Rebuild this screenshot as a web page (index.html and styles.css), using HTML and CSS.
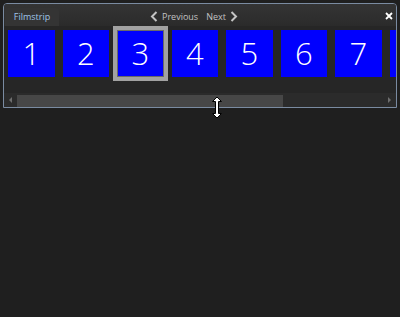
FILE: index.html
```html
<!DOCTYPE html>
<html lang="en">
<head>
    <meta charset="UTF-8">
    <title>Filmstrip</title>
    <link rel="stylesheet" href="styles.css">
</head>
<body>
    <div class="filmstrip">
        <div class="header">
            <div class="tab">Filmstrip</div>
            <div class="nav">
                <span class="nav-btn">
                    <svg class="chevron" width="8" height="11" viewBox="0 0 8 11"><path d="M6.5 1 L2 5.5 L6.5 10" fill="none" stroke="#c4c4c4" stroke-width="2"/></svg>
                    Previous
                </span>
                <span class="nav-btn next">
                    Next
                    <svg class="chevron" width="8" height="11" viewBox="0 0 8 11"><path d="M1.5 1 L6 5.5 L1.5 10" fill="none" stroke="#c4c4c4" stroke-width="2"/></svg>
                </span>
            </div>
            <svg class="close" width="8" height="8" viewBox="0 0 8 8"><path d="M1 1 L7 7 M7 1 L1 7" stroke="#ffffff" stroke-width="1.8"/></svg>
        </div>
        <div class="strip">
            <div class="thumb">1</div>
            <div class="thumb">2</div>
            <div class="thumb selected">3</div>
            <div class="thumb">4</div>
            <div class="thumb">5</div>
            <div class="thumb">6</div>
            <div class="thumb">7</div>
            <div class="thumb"></div>
        </div>
        <div class="scrollbar">
            <div class="arrow left"></div>
            <div class="thumb-bar"></div>
            <div class="track"></div>
            <div class="arrow right"></div>
        </div>
    </div>

    <svg class="cursor" width="12" height="23" viewBox="0 0 12 23">
        <path d="M6 1 L10.5 5.5 L7.5 5.5 L7.5 17.5 L10.5 17.5 L6 22 L1.5 17.5 L4.5 17.5 L4.5 5.5 L1.5 5.5 Z" fill="#ffffff" stroke="#000000" stroke-width="1"/>
    </svg>
</body>
</html>
```

FILE: styles.css
```css
body {
    margin: 0;
    background: #1f1f1f;
    font-family: 'Open Sans', 'Noto Sans', sans-serif;
    width: 400px;
    height: 317px;
    overflow: hidden;
    position: relative;
}
.filmstrip {
    margin: 3px 0 0 3px;
    width: 392px;
    border: 1px solid #7a8ba1;
    border-radius: 4px 4px 0 0;
    background: #262626;
    overflow: hidden;
}
.header {
    height: 22px;
    display: flex;
    align-items: flex-end;
    background: linear-gradient(#343434, #2b2b2b);
}
.tab {
    margin-left: 1px;
    width: 54px;
    height: 18px;
    line-height: 18px;
    text-align: center;
    background: #343434;
    border-radius: 3px 3px 0 0;
    color: #9fc4e8;
    font-size: 9px;
}
.nav {
    display: flex;
    align-self: center;
    margin-left: 91px;
    margin-top: 2px;
    gap: 8px;
    color: #c2c2c2;
    font-size: 9px;
}
.nav-btn {
    display: flex;
    align-items: center;
    gap: 4px;
}
.close {
    align-self: center;
    margin-left: auto;
    margin-right: 3px;
    margin-top: 2px;
}
.strip {
    display: flex;
    height: 54.5px;
    padding-bottom: 12.5px;
    overflow: hidden;
}
.thumb {
    flex: 0 0 auto;
    width: 46.5px;
    height: 46.5px;
    border: 4px solid transparent;
    background: #0000fe;
    background-clip: content-box;
    color: #ffffff;
    font-size: 31px;
    font-weight: 300;
    line-height: 46px;
    text-align: center;
}
.thumb.selected {
    border-color: #a2a2a2;
    box-shadow: inset 0 0 0 1px #6a6a6a;
}
.scrollbar {
    display: flex;
    height: 14px;
    background: #2b2b2b;
}
.arrow {
    width: 13px;
    display: flex;
    align-items: center;
    justify-content: center;
}
.arrow::before {
    content: '';
    border-top: 3px solid transparent;
    border-bottom: 3px solid transparent;
}
.arrow.left::before {
    border-right: 3px solid #6e6e6e;
}
.arrow.right::before {
    border-left: 3px solid #6e6e6e;
}
.thumb-bar {
    width: 266px;
    margin-top: 2px;
    background: #474747;
}
.track {
    flex: 1;
}
.cursor {
    position: absolute;
    left: 211px;
    top: 96px;
}
```
